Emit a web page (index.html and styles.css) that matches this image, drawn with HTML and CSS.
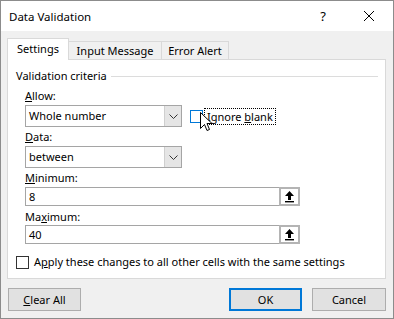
FILE: index.html
```html
<!DOCTYPE html>
<html lang="en">
<head>
  <meta charset="UTF-8" />
  <title>Data Validation</title>
  <link rel="stylesheet" href="styles.css">
</head>
<body>
  <div class="dialog">
    <div class="titlebar">
      <span class="title">Data Validation</span>
      <span class="help">?</span>
      <svg class="close" width="12" height="12" viewBox="0 0 12 12">
        <path d="M1 1 L11 11 M11 1 L1 11" stroke="#000" stroke-width="1" fill="none"/>
      </svg>
    </div>

    <div class="tabs">
      <div class="tab active">Settings</div>
      <div class="tab">Input Message</div>
      <div class="tab">Error Alert</div>
    </div>

    <div class="panel">
      <div class="group-title"><span>Validation criteria</span></div>

      <div class="fields">
        <div class="label label-allow"><u>A</u>llow:</div>
        <div class="row">
          <div class="combo">
            <span class="combo-text">Whole number</span>
            <span class="combo-btn">
              <svg width="9" height="5" viewBox="0 0 9 5"><path d="M0.5 0.5 L4.5 4.5 L8.5 0.5" stroke="#333" fill="none"/></svg>
            </span>
          </div>
          <div class="ignore">
            <span class="checkbox hover"></span>
            <span class="focus-label">Ignore <u>b</u>lank</span>
          </div>
        </div>

        <div class="label label-data"><u>D</u>ata:</div>
        <div class="combo">
          <span class="combo-text">between</span>
          <span class="combo-btn">
            <svg width="9" height="5" viewBox="0 0 9 5"><path d="M0.5 0.5 L4.5 4.5 L8.5 0.5" stroke="#333" fill="none"/></svg>
          </span>
        </div>

        <div class="label label-min"><u>M</u>inimum:</div>
        <div class="textbox">
          <span class="textbox-text">8</span>
          <span class="ref-btn">
            <svg width="11" height="12" viewBox="0 0 11 12"><path d="M5.5 0 L10 5 L7 5 L7 9 L4 9 L4 5 L1 5 Z" fill="#000"/><rect x="1" y="10" width="9" height="1.4" fill="#000"/></svg>
          </span>
        </div>

        <div class="label label-max">Ma<u>x</u>imum:</div>
        <div class="textbox">
          <span class="textbox-text">40</span>
          <span class="ref-btn">
            <svg width="11" height="12" viewBox="0 0 11 12"><path d="M5.5 0 L10 5 L7 5 L7 9 L4 9 L4 5 L1 5 Z" fill="#000"/><rect x="1" y="10" width="9" height="1.4" fill="#000"/></svg>
          </span>
        </div>
      </div>

      <div class="apply">
        <span class="checkbox"></span>
        <span>A<u>p</u>ply these changes to all other cells with the same settings</span>
      </div>
    </div>

    <div class="footer">
      <button class="btn"><u>C</u>lear All</button>
      <div class="footer-right">
        <button class="btn default">OK</button>
        <button class="btn">Cancel</button>
      </div>
    </div>

    <svg class="cursor" width="13" height="20" viewBox="0 0 13 20">
      <path d="M0.5 0.5 L0.5 16.5 L4.5 12.5 L7 18.5 L9.5 17.5 L7 11.5 L12 11.5 Z" fill="#fff" stroke="#000" stroke-width="1" stroke-linejoin="miter"/>
    </svg>
  </div>
</body>
</html>
```

FILE: styles.css
```css
* { margin: 0; padding: 0; box-sizing: border-box; }
body { font-family: 'Noto Sans', sans-serif; font-size: 11px; color: #000; }

.dialog {
  position: relative;
  width: 394px;
  height: 319px;
  background: #f0f0f0;
  border: 1px solid #8c8c8c;
}

.titlebar {
  height: 30px;
  background: #fff;
  display: flex;
  align-items: center;
  padding-left: 8px;
  font-size: 11.5px;
}

.title { flex: 1; }
.help { margin-right: 37px; font-size: 13px; }
.close { margin-right: 18px; }

.tabs {
  display: flex;
  align-items: flex-end;
  padding-top: 7px;
  margin-left: 6px;
}

.tab {
  height: 18px;
  border: 1px solid #d9d9d9;
  border-bottom: none;
  background: #f0f0f0;
  line-height: 17px;
  text-align: center;
  margin-left: -1px;
}

.tab:nth-child(2) { width: 94px; }
.tab:nth-child(3) { width: 68px; }

.tab.active {
  position: relative;
  z-index: 1;
  width: 62px;
  height: 22px;
  margin-left: 0;
  margin-bottom: -1px;
  background: #fff;
  line-height: 20px;
}

.panel {
  margin-left: 6px;
  width: 379px;
  height: 220px;
  background: #fff;
  border: 1px solid #d9d9d9;
  padding: 8px 7px 0 8px;
}

.group-title {
  display: flex;
  align-items: center;
  height: 16px;
  line-height: 16px;
}

.group-title::after {
  content: '';
  flex: 1;
  height: 1px;
  background: #dcdcdc;
  margin-left: 4px;
}

.fields { padding-left: 9px; }

.label { height: 16px; line-height: 16px; }
.label-allow { margin-top: 4px; margin-bottom: 1px; }
.label-data { margin-top: 2px; margin-bottom: 1px; }
.label-min { margin-top: 2px; margin-bottom: 1px; }
.label-max { margin-top: 3px; }

.row { display: flex; align-items: center; }

.combo {
  width: 157px;
  height: 22px;
  border: 1px solid #a5a5a5;
  background: #fff;
  display: flex;
  align-items: stretch;
}

.combo-text { flex: 1; line-height: 20px; padding-left: 3px; }

.combo-btn {
  width: 17px;
  background: #e5e5e5;
  border-left: 1px solid #cfcfcf;
  display: flex;
  align-items: center;
  justify-content: center;
}

.ignore {
  display: flex;
  align-items: center;
  margin-left: 8px;
}

.checkbox {
  width: 13px;
  height: 13px;
  border: 1px solid #333;
  background: #fff;
}

.checkbox.hover { border-color: #0078d7; }

.focus-label {
  margin-left: 2px;
  padding: 0 2px;
  line-height: 15px;
  outline: 1px dotted #000;
}

.textbox {
  width: 275px;
  height: 19px;
  border: 1px solid #a5a5a5;
  background: #fff;
  display: flex;
  align-items: stretch;
}

.textbox-text { flex: 1; line-height: 17px; padding-left: 3px; }

.ref-btn {
  width: 21px;
  border: 2px solid #b4b4b4;
  margin: -1px -1px -1px 0;
  background: #fff;
  display: flex;
  align-items: center;
  justify-content: center;
}

.apply {
  display: flex;
  align-items: center;
  gap: 5px;
  margin-top: 10px;
  line-height: 16px;
}

.footer {
  display: flex;
  justify-content: space-between;
  margin-top: 9px;
  padding: 0 7px 0 7px;
}

.footer-right { display: flex; gap: 10px; }

.btn {
  height: 23px;
  width: 74px;
  background: #e1e1e1;
  border: 1px solid #adadad;
  font-family: inherit;
  font-size: 11px;
  color: #000;
}

.btn.default { border: 2px solid #0078d7; }
.btn:first-child { width: 73px; }

.cursor {
  position: absolute;
  left: 199px;
  top: 111px;
}
```
